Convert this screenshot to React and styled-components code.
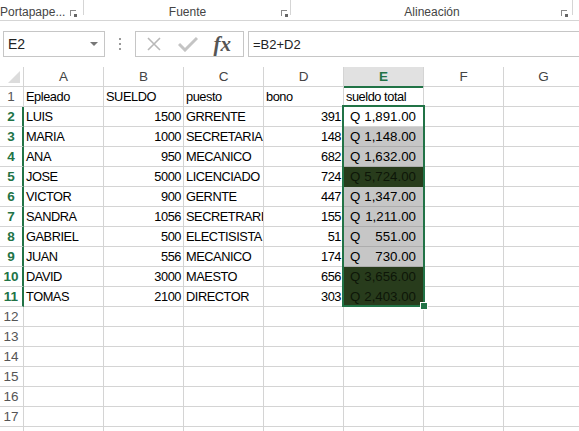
import React from "react";
import styled, { createGlobalStyle } from "styled-components";

const GREEN = "#217346";

const rows = [
  ["Epleado", "SUELDO", "puesto", "bono", "sueldo total", "head"],
  ["LUIS", 1500, "GRRENTE", 391, "1,891.00", "white"],
  ["MARIA", 1000, "SECRETARIA", 148, "1,148.00", "gray"],
  ["ANA", 950, "MECANICO", 682, "1,632.00", "gray"],
  ["JOSE", 5000, "LICENCIADO", 724, "5,724.00", "dark"],
  ["VICTOR", 900, "GERNTE", 447, "1,347.00", "gray"],
  ["SANDRA", 1056, "SECRETRARIA", 155, "1,211.00", "gray"],
  ["GABRIEL", 500, "ELECTISISTA", 51, "551.00", "gray"],
  ["JUAN", 556, "MECANICO", 174, "730.00", "gray"],
  ["DAVID", 3000, "MAESTO", 656, "3,656.00", "dark"],
  ["TOMAS", 2100, "DIRECTOR", 303, "2,403.00", "dark"],
];

const cols = ["A", "B", "C", "D", "E", "F", "G"];

const GlobalStyle = createGlobalStyle`
  body {
    margin: 0;
    background: #fff;
    font-family: "Liberation Sans", Arial, sans-serif;
    overflow: hidden;
  }
`;

const Page = styled.div`
  width: 579px;
  height: 431px;
  overflow: hidden;
  background: #fff;
`;

const Ribbon = styled.div`
  display: flex;
  height: 20px;
  border-bottom: 1px solid #d5d5d5;
  margin-bottom: 10px;
`;

const Group = styled.div`
  position: relative;
  width: ${(p) => p.$w}px;
  flex: none;
  display: flex;
  align-items: center;
  justify-content: ${(p) => (p.$left ? "flex-start" : "center")};
  font-size: 12px;
  color: #444;
  padding-top: 4px;
  box-sizing: border-box;
  &::after {
    content: "";
    position: absolute;
    right: 0;
    top: 0;
    height: 15px;
    border-right: 1px solid #d5d5d5;
  }
`;

const Launcher = styled.span`
  position: absolute;
  right: ${(p) => p.$r}px;
  top: 10px;
  width: 5px;
  height: 5px;
  border-left: 1px solid #8a8a8a;
  border-top: 1px solid #8a8a8a;
  &::after {
    content: "";
    position: absolute;
    right: -1px;
    bottom: -1px;
    width: 3px;
    height: 3px;
    background: #666;
  }
`;

const FormulaBar = styled.div`
  display: flex;
  height: 26px;
  margin-bottom: 10px;
  box-sizing: border-box;
`;

const NameBox = styled.div`
  margin-left: 3px;
  width: 102px;
  border: 1px solid #c6c6c6;
  box-sizing: border-box;
  display: flex;
  align-items: center;
  justify-content: space-between;
  padding: 0 6px 0 4px;
  font-size: 14px;
  color: #222;
`;

const Caret = styled.span`
  width: 0;
  height: 0;
  border-left: 4px solid transparent;
  border-right: 4px solid transparent;
  border-top: 4px solid #777;
`;

const Dots = styled.div`
  width: 30px;
  display: flex;
  flex-direction: column;
  align-items: center;
  justify-content: center;
  gap: 3px;
  span {
    width: 2px;
    height: 2px;
    background: #9a9a9a;
  }
`;

const ButtonBox = styled.div`
  width: 109px;
  border: 1px solid #c6c6c6;
  box-sizing: border-box;
  display: flex;
  align-items: center;
  justify-content: space-around;
  padding: 0 4px 0 2px;
`;

const Fx = styled.span`
  font-family: "Liberation Serif", "Times New Roman", serif;
  font-style: italic;
  font-weight: bold;
  font-size: 21px;
  color: #555;
  line-height: 1;
`;

const Input = styled.div`
  flex: 1;
  margin-left: 4px;
  border: 1px solid #c6c6c6;
  border-right: none;
  box-sizing: border-box;
  display: flex;
  align-items: center;
  padding-left: 4px;
  font-size: 13px;
  color: #222;
`;

const Sheet = styled.div`
  position: relative;
  display: grid;
  grid-template-columns: 24px repeat(7, 80px);
  grid-auto-rows: 20px;
`;

const Corner = styled.div`
  border-right: 1px solid #d4d4d4;
  border-bottom: 1px solid #d4d4d4;
  display: flex;
  align-items: flex-end;
  justify-content: flex-end;
  padding: 0 3px 3px 0;
`;

const ColHead = styled.div`
  border-right: 1px solid #d4d4d4;
  border-bottom: ${(p) => (p.$active ? `2px solid ${GREEN}` : "1px solid #d4d4d4")};
  background: ${(p) => (p.$active ? "#e1e1e1" : "#fff")};
  color: ${(p) => (p.$active ? GREEN : "#444")};
  font-weight: ${(p) => (p.$active ? "bold" : "normal")};
  font-size: 13.5px;
  text-align: center;
  line-height: 19px;
  margin-bottom: ${(p) => (p.$active ? "-1px" : "0")};
`;

const RowHead = styled.div`
  border-right: ${(p) => (p.$active ? `2px solid ${GREEN}` : "1px solid #d4d4d4")};
  border-bottom: 1px solid #d4d4d4;
  color: ${(p) => (p.$active ? GREEN : "#555")};
  font-weight: ${(p) => (p.$active ? "bold" : "normal")};
  font-size: 13.5px;
  text-align: center;
  line-height: 20px;
  box-sizing: border-box;
  padding-right: ${(p) => (p.$active ? "0" : "1px")};
`;

const Filler = styled.div`
  grid-column: 1 / -1;
  display: grid;
  grid-template-columns: 24px repeat(7, 80px);
  div {
    border-right: 1px solid #d4d4d4;
  }
`;

const fills = {
  gray: { bg: "#c6c6c6", line: "#adadad", color: "#000" },
  dark: { bg: "#283c1c", line: "#283c1c", color: "#0d1608" },
  white: { bg: "#fff", line: "#d4d4d4", color: "#000" },
};

const Cell = styled.div`
  border-right: 1px solid #d4d4d4;
  border-bottom: 1px solid ${(p) => (p.$fill ? fills[p.$fill].line : "#d4d4d4")};
  background: ${(p) => (p.$fill ? fills[p.$fill].bg : "transparent")};
  color: ${(p) => (p.$fill ? fills[p.$fill].color : "#000")};
  font-size: 12.8px;
  letter-spacing: -0.45px;
  line-height: 20px;
  padding: 0 2px;
  white-space: nowrap;
  overflow: hidden;
  text-align: ${(p) => (p.$right ? "right" : "left")};
  display: ${(p) => (p.$money ? "flex" : "block")};
  justify-content: space-between;
  ${(p) => p.$money && "padding: 0 7px 0 6px; font-size: 13.3px; letter-spacing: 0;"}
`;

const Selection = styled.div`
  position: absolute;
  left: 342px;
  top: 38px;
  width: 83px;
  height: 202px;
  border: 2px solid ${GREEN};
  box-sizing: border-box;
  pointer-events: none;
`;

const Handle = styled.div`
  position: absolute;
  right: -5px;
  bottom: -5px;
  width: 6px;
  height: 6px;
  background: ${GREEN};
  border: 1px solid #fff;
`;

const Tri = () => (
  <svg width="12" height="12" viewBox="0 0 12 12">
    <polygon points="12,0 12,12 0,12" fill="#dcdcdc" />
  </svg>
);

const CancelIcon = () => (
  <svg width="16" height="16" viewBox="0 0 16 16">
    <path d="M2 2 L14 14 M14 2 L2 14" stroke="#b8b8b8" strokeWidth="1.6" fill="none" />
  </svg>
);

const CheckIcon = () => (
  <svg width="20" height="16" viewBox="0 0 20 16">
    <path d="M1 8 L7 14 L19 2" stroke="#c4c4c4" strokeWidth="3" fill="none" />
  </svg>
);

const App = () => {
  const bodyRows = [];
  for (let r = 1; r <= 17; r++) {
    const data = rows[r - 1];
    const active = r >= 2 && r <= 11;
    bodyRows.push(<RowHead key={`h${r}`} $active={active}>{r}</RowHead>);
    cols.forEach((c, i) => {
      const key = `${c}${r}`;
      if (!data || i > 4) {
        bodyRows.push(<Cell key={key} />);
        return;
      }
      const v = data[i];
      const isHead = data[5] === "head";
      if (i === 4 && !isHead) {
        bodyRows.push(
          <Cell key={key} $fill={data[5]} $money>
            <span>Q</span>
            <span>{v}</span>
          </Cell>
        );
        return;
      }
      bodyRows.push(
        <Cell key={key} $right={typeof v === "number"}>
          {v}
        </Cell>
      );
    });
  }

  return (
    <Page>
      <GlobalStyle />
      <Ribbon>
        <Group $w={84} $left>
          Portapape...
          <Launcher $r={8} />
        </Group>
        <Group $w={207}>
          Fuente
          <Launcher $r={4} />
        </Group>
        <Group $w={282}>
          Alineación
          <Launcher $r={6} />
        </Group>
      </Ribbon>
      <FormulaBar>
        <NameBox>
          E2
          <Caret />
        </NameBox>
        <Dots>
          <span />
          <span />
          <span />
        </Dots>
        <ButtonBox>
          <CancelIcon />
          <CheckIcon />
          <Fx>fx</Fx>
        </ButtonBox>
        <Input>=B2+D2</Input>
      </FormulaBar>
      <Sheet>
        <Corner>
          <Tri />
        </Corner>
        {cols.map((c) => (
          <ColHead key={c} $active={c === "E"}>
            {c}
          </ColHead>
        ))}
        {bodyRows}
        <Filler>
          {["h", ...cols].map((c) => (
            <div key={c} />
          ))}
        </Filler>
        <Selection>
          <Handle />
        </Selection>
      </Sheet>
    </Page>
  );
};

export default App;
